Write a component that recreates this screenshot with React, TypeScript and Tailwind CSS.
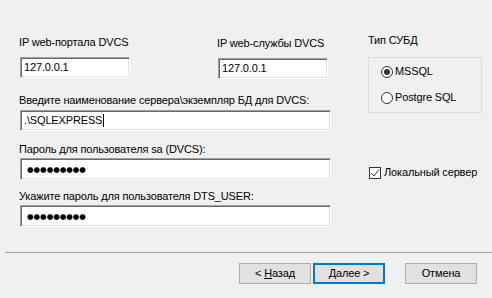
import React from "react";

const inputCls =
  "relative h-[21px] bg-white border border-t-[#a0a0a0] border-l-[#a0a0a0] border-r-white border-b-white shadow-[inset_1px_1px_0_#696969,inset_-1px_-1px_0_#e3e3e3] flex items-center pl-[3px] text-[11px] leading-[13px] text-black";

function Dots() {
  return (
    <span className="font-['DejaVu_Sans'] text-[7.5px] tracking-[0px] text-black">●●●●●●●●●</span>
  );
}

function Btn({ children, primary }: { children: React.ReactNode; primary?: boolean }) {
  return (
    <div
      className={
        "w-[72px] h-[21px] flex items-center justify-center bg-[#e1e1e1] text-[11px] text-black " +
        (primary ? "border-2 border-[#0078d7]" : "border border-[#adadad]")
      }
    >
      <span className="whitespace-pre">{children}</span>
    </div>
  );
}

export default function App() {
  return (
    <div className="w-[492px] h-[298px] bg-[#f0f0f0] font-['Liberation_Sans',Arial,sans-serif] text-[11px] leading-[13px] tracking-[-0.15px] text-black overflow-hidden flex flex-col">
      <div className="flex h-[249px]">
        {/* left column */}
        <div className="ml-[19px] w-[313px] flex flex-col">
          <div className="flex mt-[36px]">
            <div className="flex flex-col w-[198px]">
              <div className="h-[13px]">IP web-портала DVCS</div>
              <div className={inputCls + " ml-px mt-[8px] w-[110px] h-[20px]"}>127.0.0.1</div>
            </div>
            <div className="flex flex-col mt-px">
              <div className="h-[13px]">IP web-службы DVCS</div>
              <div className={inputCls + " ml-px mt-[8px] w-[110px] h-[20px]"}>127.0.0.1</div>
            </div>
          </div>
          <div className="mt-[15px] h-[13px]">Введите наименование сервера\экземпляр БД для DVCS:</div>
          <div className={inputCls + " ml-px mt-[3px] w-[311px]"}>
            .\SQLEXPRESS<span className="inline-block w-px h-[13px] bg-black ml-px" />
          </div>
          <div className="mt-[12px] h-[13px]">Пароль для пользователя sa (DVCS):</div>
          <div className={inputCls + " ml-px mt-[2px] w-[311px] h-[22px] pl-[6px]"}>
            <Dots />
          </div>
          <div className="mt-[10px] h-[13px]">Укажите пароль для пользователя DTS_USER:</div>
          <div className={inputCls + " ml-px mt-[2px] w-[311px] h-[22px] pl-[6px]"}>
            <Dots />
          </div>
        </div>
        {/* right column */}
        <div className="ml-[36px] flex flex-col">
          <div className="mt-[34px] h-[13px]">Тип СУБД</div>
          <div className="mt-[10px] w-[114px] h-[56px] border border-[#dcdcdc] flex flex-col pl-[12px] pt-[7px] gap-[13px]">
            <div className="flex items-center gap-[2px]">
              <span className="w-[12px] h-[12px] rounded-full border border-[#333] bg-white flex items-center justify-center">
                <span className="w-[6px] h-[6px] rounded-full bg-[#333]" />
              </span>
              <span>MSSQL</span>
            </div>
            <div className="flex items-center gap-[2px]">
              <span className="w-[12px] h-[12px] rounded-full border border-[#333] bg-white" />
              <span>Postgre SQL</span>
            </div>
          </div>
          <div className="mt-[53px] flex items-center gap-[3px] ml-px">
            <span className="w-[12px] h-[12px] border border-[#333] bg-white flex items-center justify-center">
              <svg width="10" height="10" viewBox="0 0 10 10">
                <path d="M1 5 L4 8 L9 1.5" fill="none" stroke="#333" strokeWidth="1" />
              </svg>
            </span>
            <span>Локальный сервер</span>
          </div>
        </div>
      </div>
      <div className="ml-[5px] h-px bg-[#a0a0a0] mt-[3px]" />
      <div className="mt-[10px] flex">
        <div className="ml-[239px]">
          <Btn>
            {"< "}<span className="underline">Н</span>азад
          </Btn>
        </div>
        <div className="ml-[2px]">
          <Btn primary>
            <span className="underline">Д</span>{"алее >"}
          </Btn>
        </div>
        <div className="ml-[20px]">
          <Btn>Отмена</Btn>
        </div>
      </div>
    </div>
  );
}
